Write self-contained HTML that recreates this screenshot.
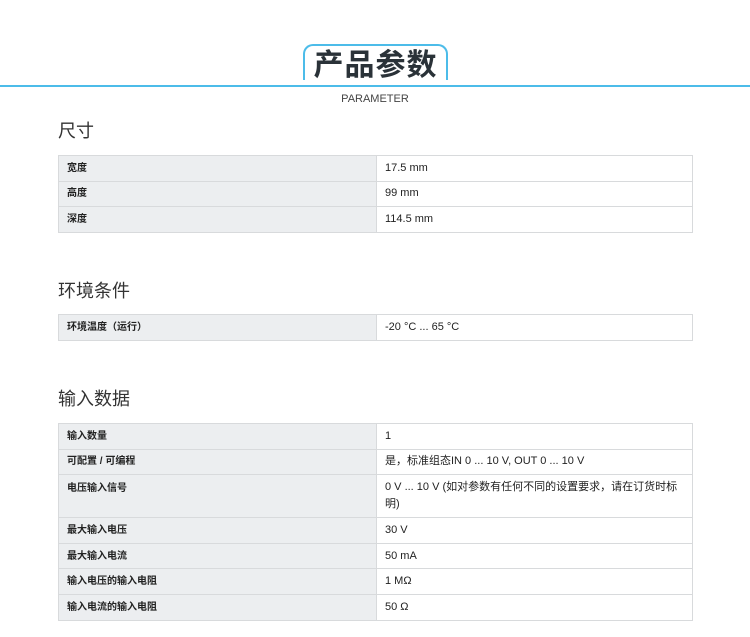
<!DOCTYPE html>
<html><head><meta charset="utf-8"><style>
body{margin:0;width:750px;height:637px;background:#fff;font-family:"Liberation Sans","Noto Sans CJK SC",sans-serif;position:relative;overflow:hidden}
.line{position:absolute;left:0;top:85px;width:750px;height:2px;background:#4cbce9}
.box{position:absolute;left:303px;top:44px;width:141px;height:34px;border:2px solid #4cbce9;border-bottom:none;border-radius:10px 10px 0 0;background:#fff}
.tt{position:absolute;left:303px;top:46px;width:145px;text-align:center;font-size:30px;font-weight:bold;color:#2a3238;line-height:40px;letter-spacing:1px}
.sub{position:absolute;left:0;width:750px;top:93px;text-align:center;font-size:11px;color:#444;}
h2{position:absolute;left:58px;margin:0;font-size:18px;font-weight:normal;color:#333;line-height:20px}
table{position:absolute;left:58px;width:635px;border-collapse:collapse;font-size:11px;color:#222}
td{border:1px solid #d8dadc;height:24.6px;padding:0 8px;vertical-align:middle;line-height:17px}
td:first-child{width:301px;background:#eceef0;font-weight:bold;font-size:10px}
</style></head><body>
<div class="line"></div>
<div class="box"></div>
<div class="tt">产品参数</div>
<div class="sub">PARAMETER</div>
<h2 style="top:121px">尺寸</h2>
<table style="top:155px">
<tr><td>宽度</td><td>17.5 mm</td></tr>
<tr><td>高度</td><td>99 mm</td></tr>
<tr><td>深度</td><td>114.5 mm</td></tr>
</table>
<h2 style="top:281px">环境条件</h2>
<table style="top:314px">
<tr><td>环境温度（运行）</td><td>-20 °C ... 65 °C</td></tr>
</table>
<h2 style="top:389px">输入数据</h2>
<table style="top:423px">
<tr><td>输入数量</td><td>1</td></tr>
<tr><td>可配置 / 可编程</td><td>是，标准组态IN 0 ... 10 V, OUT 0 ... 10 V</td></tr>
<tr><td style="vertical-align:top;padding-top:5px;height:37px">电压输入信号</td><td style="padding-top:2px;padding-bottom:2px">0 V ... 10 V (如对参数有任何不同的设置要求，请在订货时标明)</td></tr>
<tr><td>最大输入电压</td><td>30 V</td></tr>
<tr><td>最大输入电流</td><td>50 mA</td></tr>
<tr><td>输入电压的输入电阻</td><td>1 MΩ</td></tr>
<tr><td>输入电流的输入电阻</td><td>50 Ω</td></tr>
</table>
</body></html>
